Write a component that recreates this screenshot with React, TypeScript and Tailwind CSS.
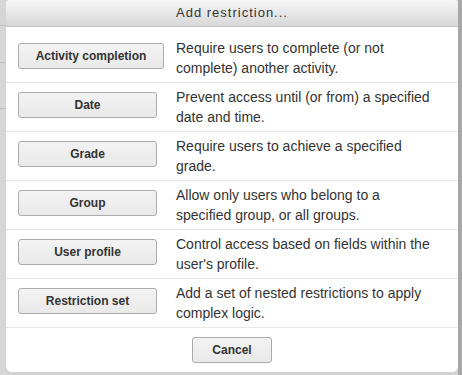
const options = [
  { label: 'Activity completion', wide: true, text: ['Require users to complete (or not', 'complete) another activity.'] },
  { label: 'Date', text: ['Prevent access until (or from) a specified', 'date and time.'] },
  { label: 'Grade', text: ['Require users to achieve a specified', 'grade.'] },
  { label: 'Group', text: ['Allow only users who belong to a', 'specified group, or all groups.'] },
  { label: 'User profile', text: ['Control access based on fields within the', "user's profile."] },
  { label: 'Restriction set', text: ['Add a set of nested restrictions to apply', 'complex logic.'] },
];

function Button({ label, className }: { label: string; className: string }) {
  return (
    <button
      className={`h-[26px] rounded-[3px] border border-[#ababab] bg-gradient-to-b from-[#f3f3f3] to-[#e9e9e9] text-[12px] font-bold text-[#333] ${className}`}
    >
      {label}
    </button>
  );
}

export default function App() {
  return (
    <div className="w-[462px] h-[375px] flex bg-[#d3d3d3] font-['Liberation_Sans',Arial,sans-serif] overflow-hidden">
      {/* page behind the dialog */}
      <div className="w-[6px] shrink-0 flex flex-col bg-[#d6d6d6]">
        <div className="h-[26px] border-b border-[#bdbdbd]" />
        <div className="h-[37px] border-b border-[#bdbdbd]" />
        <div className="h-[46px] border-b border-[#bdbdbd]" />
      </div>

      <div className="w-[452px] h-[372px] shrink-0 bg-white rounded-b-[6px] rounded-t-[4px] flex flex-col">
        <div className="h-[27px] shrink-0 rounded-t-[4px] border-b border-[#c4c4c4] bg-gradient-to-b from-[#f6f6f6] to-[#d8d8d8] flex items-center justify-center">
          <span className="text-[13px] tracking-[1px] text-[#333]">Add restriction...</span>
        </div>

        <div className="pt-[7px] flex flex-col">
          {options.map(o => (
            <div key={o.label} className="h-[49px] flex border-b border-[#e8e8e8]">
              <div className="w-[170px] shrink-0 pl-[12px] pt-[9px]">
                <Button label={o.label} className={o.wide ? 'w-[146px]' : 'w-[139px]'} />
              </div>
              <div className="pt-[4px] text-[14px] leading-[20px] text-[#333]">
                {o.text.map(line => (
                  <div key={line} className="whitespace-nowrap">{line}</div>
                ))}
              </div>
            </div>
          ))}
        </div>

        <div className="pt-[9px] flex justify-center">
          <Button label="Cancel" className="w-[80px]" />
        </div>
      </div>

      <div className="w-[4px] shrink-0 bg-[#a7a7a7]" />
    </div>
  );
}
